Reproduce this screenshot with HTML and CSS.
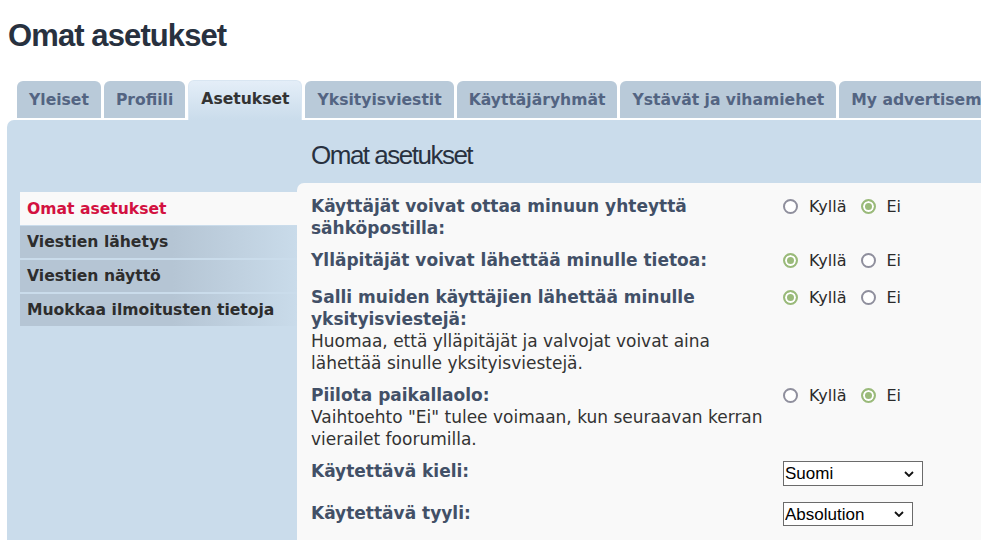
FILE: index.html
```
<!DOCTYPE html>
<html lang="fi">
<head>
    <meta charset="UTF-8">
    <meta name="viewport" content="width=device-width, initial-scale=1.0">
    <link rel="stylesheet" href="styles.css">
    <title>Omat asetukset</title>
</head>
<body>
    <h1 class="page-title">Omat asetukset</h1>

    <ul class="tabs">
        <li class="tab">Yleiset</li>
        <li class="tab">Profiili</li>
        <li class="tab tab-active">Asetukset</li>
        <li class="tab">Yksityisviestit</li>
        <li class="tab">Käyttäjäryhmät</li>
        <li class="tab">Ystävät ja vihamiehet</li>
        <li class="tab">My advertisements</li>
    </ul>

    <div class="panel">
        <ul class="side-menu">
            <li class="side-item side-active">Omat asetukset</li>
            <li class="side-item">Viestien lähetys</li>
            <li class="side-item">Viestien näyttö</li>
            <li class="side-item">Muokkaa ilmoitusten tietoja</li>
        </ul>

        <div class="main">
            <h2 class="main-title">Omat asetukset</h2>

            <form class="main-box" action="" method="POST">

                <div class="row">
                    <div class="row-label">
                        <span class="label">Käyttäjät voivat ottaa minuun yhteyttä sähköpostilla:</span>
                    </div>
                    <div class="row-field">
                        <label class="choice"><input type="radio" name="viewemail" value="1"> Kyllä</label>
                        <label class="choice"><input type="radio" name="viewemail" value="0" checked> Ei</label>
                    </div>
                </div>

                <div class="row">
                    <div class="row-label">
                        <span class="label">Ylläpitäjät voivat lähettää minulle tietoa:</span>
                    </div>
                    <div class="row-field">
                        <label class="choice"><input type="radio" name="massemail" value="1" checked> Kyllä</label>
                        <label class="choice"><input type="radio" name="massemail" value="0"> Ei</label>
                    </div>
                </div>

                <div class="row">
                    <div class="row-label">
                        <span class="label">Salli muiden käyttäjien lähettää minulle yksityisviestejä:</span>
                        <span class="desc">Huomaa, että ylläpitäjät ja valvojat voivat aina lähettää sinulle yksityisviestejä.</span>
                    </div>
                    <div class="row-field">
                        <label class="choice"><input type="radio" name="allowpm" value="1" checked> Kyllä</label>
                        <label class="choice"><input type="radio" name="allowpm" value="0"> Ei</label>
                    </div>
                </div>

                <div class="row">
                    <div class="row-label">
                        <span class="label">Piilota paikallaolo:</span>
                        <span class="desc">Vaihtoehto "Ei" tulee voimaan, kun seuraavan kerran vierailet foorumilla.</span>
                    </div>
                    <div class="row-field">
                        <label class="choice"><input type="radio" name="hideonline" value="1"> Kyllä</label>
                        <label class="choice"><input type="radio" name="hideonline" value="0" checked> Ei</label>
                    </div>
                </div>

                <div class="row row-select">
                    <div class="row-label">
                        <label class="label" for="lang">Käytettävä kieli:</label>
                    </div>
                    <div class="row-field">
                        <select id="lang" name="lang" class="select select-lang">
                            <option>Suomi</option>
                        </select>
                    </div>
                </div>

                <div class="row row-select">
                    <div class="row-label">
                        <label class="label" for="style">Käytettävä tyyli:</label>
                    </div>
                    <div class="row-field">
                        <select id="style" name="style" class="select select-style">
                            <option>Absolution</option>
                        </select>
                    </div>
                </div>

            </form>
        </div>
    </div>
</body>
</html>
```

FILE: styles.css
```
*{
    box-sizing: border-box;
}

html, body{
    height: 100%;
}

body{
    margin: 0;
    overflow: hidden;
    background-color: #fff;
    font-family: "DejaVu Sans", Verdana, sans-serif;
    color: #333;
}

.page-title{
    margin: 18px 0 0 8px;
    font-family: "Liberation Sans", Arial, sans-serif;
    font-size: 31px;
    font-weight: bold;
    letter-spacing: -0.9px;
    line-height: 36px;
    color: #28313f;
}

/* tabs */

.tabs{
    display: flex;
    gap: 3px;
    height: 40px;
    margin: 26px 0 0 17px;
    padding: 0;
    list-style: none;
    white-space: nowrap;
}

.tab{
    flex-shrink: 0;
    height: 37px;
    margin-top: 1px;
    padding: 0 12px;
    border-radius: 6px 6px 0 0;
    background-color: #b9cad9;
    font-size: 15.6px;
    font-weight: bold;
    line-height: 38px;
    color: #536482;
}

.tab-active{
    height: 40px;
    margin-top: 0;
    border: 1px solid #d9e6f2;
    border-bottom: none;
    background: linear-gradient(#e4eef8, #cadceb);
    line-height: 37px;
    color: #333;
}

/* panel */

.panel{
    display: flex;
    min-height: calc(100% - 120px);
    margin-left: 7px;
    border-radius: 7px 0 0 0;
    background-color: #cadceb;
}

.side-menu{
    flex-shrink: 0;
    align-self: flex-start;
    width: 277px;
    margin: 72px 0 0 13px;
    padding: 0;
    list-style: none;
}

.side-item{
    display: flex;
    align-items: center;
    height: 32px;
    margin-bottom: 2px;
    padding: 0 7px;
    background: linear-gradient(to right, #b5c5d4 55%, #c9dbea);
    font-size: 15.6px;
    font-weight: bold;
    color: #2d2d2d;
}

.side-active{
    height: 33px;
    margin-bottom: 1px;
    background: #f9f9f9;
    color: #d31141;
}

.main{
    flex: 1;
    display: flex;
    flex-direction: column;
}

.main-title{
    margin: 20px 0 13px 14px;
    font-family: "Liberation Sans", Arial, sans-serif;
    font-size: 26px;
    font-weight: normal;
    letter-spacing: -1.5px;
    line-height: 30px;
    color: #28313f;
}

.main-box{
    flex: 1;
    margin: 0;
    padding: 7px 0 0 14px;
    border-radius: 7px 0 0 0;
    background-color: #f9f9f9;
}

/* rows */

.row{
    display: flex;
    align-items: flex-start;
    padding: 5px 0;
}

.row-label{
    width: 460px;
    min-height: 27px;
    font-size: 17px;
    line-height: 22px;
}

.row-select .row-label{
    min-height: 32px;
}

.label{
    display: block;
    font-weight: bold;
    color: #425067;
}

.desc{
    display: block;
    color: #333;
}

.row-field{
    display: flex;
    align-items: center;
    height: 22px;
    margin-left: 12px;
}

.choice{
    display: inline-flex;
    align-items: center;
    margin-right: 14px;
    font-size: 16px;
    color: #2b2b2b;
}

.choice input{
    -webkit-appearance: none;
    appearance: none;
    width: 15px;
    height: 15px;
    margin: 0 11px 0 0;
    border: 2px solid #8f8f9d;
    border-radius: 50%;
    background-color: #fff;
}

.choice input:checked{
    border-color: #9aba7a;
    background-color: #9aba7a;
    box-shadow: inset 0 0 0 2px #fff;
}

.select{
    -webkit-appearance: none;
    appearance: none;
    align-self: flex-start;
    margin-top: 1px;
    height: 25px;
    padding: 0 0 0 1px;
    border: 1px solid #6b6b6b;
    border-radius: 0;
    background: #fff url("data:image/svg+xml,%3Csvg xmlns='http://www.w3.org/2000/svg' width='10' height='6' viewBox='0 0 10 6'%3E%3Cpath d='M1 1l4 4 4-4' fill='none' stroke='%23111' stroke-width='1.8'/%3E%3C/svg%3E") no-repeat right 8px center;
    font-family: "Liberation Sans", Arial, sans-serif;
    font-size: 17px;
    color: #000;
}

.select-lang{
    width: 140px;
}

.select-style{
    width: 130px;
    height: 24px;
    margin-top: 0;
}
```
